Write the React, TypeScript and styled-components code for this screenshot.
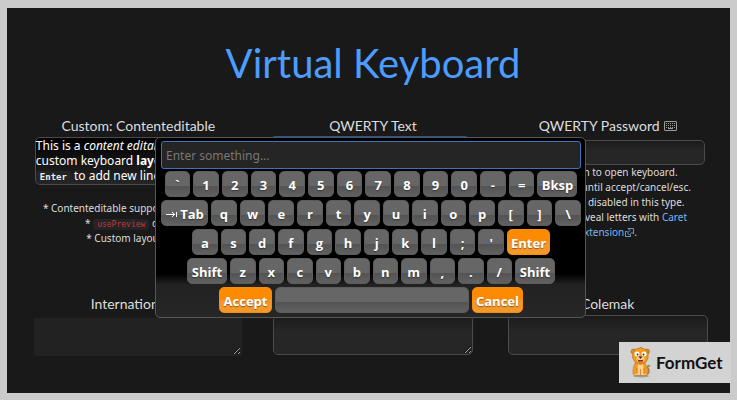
import React from "react";
import styled, { createGlobalStyle, css } from "styled-components";

const GlobalStyle = createGlobalStyle`
  * { box-sizing: border-box; }
  body {
    margin: 0;
    background: #cbcbcb;
    color: #eee;
    font-family: "Noto Sans", "Open Sans", sans-serif;
  }
`;

const Page = styled.div`
  min-height: 100vh;
  padding: 8px 7px 7px;
  display: flex;
`;

const Stage = styled.main`
  position: relative;
  flex: 1;
  padding: 26px 5px 36px 14px;
  background: #191919;
`;

const Title = styled.h1`
  margin: 0 0 24px;
  color: #4c9dff;
  font: 400 40px/58px Lato, sans-serif;
  text-align: center;
`;

const Fields = styled.div`
  display: grid;
  grid-template-columns: repeat(3, minmax(0, 1fr));
`;

const Field = styled.section<{ $tall?: boolean }>`
  display: flex;
  flex-direction: column;
  align-items: center;
  min-height: ${(p) => (p.$tall ? "178px" : "0")};
  white-space: nowrap;
`;

const Heading = styled.label`
  display: flex;
  align-items: center;
  gap: 4px;
  min-height: 20px;
  margin: 0;
  color: #ddd;
  font: 400 14px/20px Lato, sans-serif;
`;

const boxStyle = css`
  border: 1px solid #4b4b4b;
  border-radius: 5px;
  background: linear-gradient(#1b1b1b, #262626 40%);
  color: #fff;
  font-family: inherit;
  outline: none;
`;

const Editable = styled.div`
  ${boxStyle}
  width: 207px;
  height: 48px;
  margin: 1px 0 16px;
  background: linear-gradient(#000, #262626);
  font-size: 12px;
  line-height: 15px;
`;

const TextInput = styled.input<{ $active?: boolean }>`
  ${boxStyle}
  width: 200px;
  height: 25px;
  margin: 4px 5px 0 0;
  ${(p) => p.$active && css`margin-top: 0; border-color: #2b5590;`}
`;

const Area = styled.textarea<{ $plain?: boolean }>`
  ${boxStyle}
  width: 200px;
  height: 40px;
  margin-top: 1px;
  resize: both;
  ${(p) =>
    p.$plain &&
    css`
      width: 208px;
      height: 38px;
      margin-top: 4px;
      border-color: #222;
      border-radius: 2px;
      background: #222;
    `}
`;

const Notes = styled.p`
  margin: 0;
  color: #ddd;
  font-size: 10px;
  line-height: 15px;
  text-align: center;
`;

const Code = styled.code<{ $red?: boolean }>`
  padding: 1px 4px;
  border-radius: 3px;
  background: #242424;
  color: ${(p) => (p.$red ? "#c8343c" : "#eee")};
  font: ${(p) => (p.$red ? "400 8px" : "700 9px")} "DejaVu Sans Mono", monospace;
`;

const Link = styled.a`
  color: #76b8f5;
  text-decoration: none;
  svg { vertical-align: -1px; margin-left: 1px; }
`;

const Keyboard = styled.section`
  position: absolute;
  top: 129px;
  left: 148px;
  width: 431px;
  display: flex;
  flex-direction: column;
  align-items: center;
  gap: 3px;
  padding: 3px 4px 4px 5px;
  border: 1px solid #555;
  border-radius: 5px;
  background: linear-gradient(#000 76%, #222 82%, #262626);
`;

const Preview = styled.input`
  width: 100%;
  height: 28px;
  margin-bottom: -1px;
  padding: 0 4px;
  border: 1px solid #3f72ba;
  border-radius: 3px;
  outline: 0;
  background: #252525;
  color: #eee;
  font: 400 12px "Noto Sans", sans-serif;
  &::placeholder { color: #777; opacity: 1; }
`;

const KeyRow = styled.div<{ $width: number }>`
  display: flex;
  gap: 3px;
  width: 100%;
  max-width: ${(p) => p.$width}px;
`;

const Key = styled.button<{ $width?: number; $accent?: boolean }>`
  flex: ${(p) => (p.$width ? `0 0 ${p.$width}px` : "1 1 0")};
  display: flex;
  align-items: center;
  justify-content: center;
  gap: 2px;
  min-width: 0;
  height: 26px;
  padding: 2px 0 0;
  border: 1px solid ${(p) => (p.$accent ? "#fb8c06" : "#5c5c5c")};
  border-radius: 5px;
  background: ${(p) =>
    p.$accent
      ? "linear-gradient(#fc8a02 50%, #f5962a 52%, #f3992c)"
      : "linear-gradient(#666 58%, #535353 60%, #616161)"};
  color: #fff;
  font: 700 13px/20px "Open Sans", sans-serif;
  text-shadow: 0 1px 1px #0006;
  white-space: nowrap;
`;

const Badge = styled.div`
  position: absolute;
  right: -1px;
  bottom: 10px;
  display: flex;
  align-items: center;
  gap: 4px;
  width: 112px;
  height: 41px;
  padding-left: 11px;
  background: #d3d3d3;
  color: #111;
  font: 700 17px/20px Lato, sans-serif;
`;

const KeyboardIcon = () => (
  <svg width="13" height="10" viewBox="0 0 13 10" fill="none" stroke="#9a9a9a" aria-hidden="true">
    <rect x=".5" y=".5" width="12" height="9" rx=".5" />
    <path d="M2 2.5h9M2 4.5h9M2 6.5h9" strokeDasharray="1 1" />
    <path d="M4 7.5h5" />
  </svg>
);

const ExternalIcon = () => (
  <svg width="9" height="9" viewBox="0 0 9 9" fill="none" stroke="#76b8f5" strokeWidth=".8" aria-hidden="true">
    <path d="M2.500 3.500h-2v5h5V7M3 .5h5.500V6L7 4.500l-2.500 2.500L2.500 5 5 2.500z" />
  </svg>
);

const TabIcon = () => (
  <svg width="13" height="9" viewBox="0 0 13 9" fill="none" stroke="#fff" aria-hidden="true">
    <path d="M1 4.500h9M7 2l2.500 2.500L7 7M11.500 2v5" />
  </svg>
);

const Lion = () => (
  <svg width="22" height="31" viewBox="0 0 22 31" aria-hidden="true">
    <ellipse cx="11" cy="29" rx="8" ry="1.500" fill="#a49b91" />
    <path d="M16 27c4 0 3-5 2-6s0-3 2-2" fill="none" stroke="#9b7b55" strokeWidth="1.500" />
    <path d="M6 15c-3 4-4 11-2 13h13c2-4 0-10-3-13z" fill="#f39a22" stroke="#bc7220" strokeWidth=".6" />
    <path d="M8 17q2 2 5 0l1 11H7z" fill="#f9d38b" />
    <path d="M7 21v7M14 21v7M10.500 22v6" stroke="#bd731d" strokeWidth=".7" />
    <path d="M4 28q2-3 5 0zM12 28q3-3 5 0z" fill="#ffc65c" />
    <circle cx="3.500" cy="4.500" r="2.500" fill="#e78b20" stroke="#8f6a42" strokeWidth=".6" />
    <circle cx="17" cy="4.500" r="2.500" fill="#e78b20" stroke="#8f6a42" strokeWidth=".6" />
    <path d="M3 5q3-4 7-4l1-1 1 1q5 1 6 5 1 6-2 9-6 4-11 0-4-4-2-10z" fill="#f5991f" stroke="#ad6b24" strokeWidth=".6" />
    <circle cx="7" cy="7" r="2.500" fill="#fff" />
    <circle cx="14" cy="7" r="2.500" fill="#fff" />
    <circle cx="7.500" cy="7.500" r=".9" fill="#222" />
    <circle cx="13.500" cy="7.500" r=".9" fill="#222" />
    <ellipse cx="10.500" cy="12" rx="4" ry="2.500" fill="#f8d599" />
    <path d="M8.500 9.500h4L10.500 12z" fill="#4b2517" />
    <path d="M7.500 12.500q3 1 6 0-1 3-3 3t-3-3z" fill="#8d2824" />
    <path d="M9 14.500q1.500-1 3 0-1.500 1.500-3 0z" fill="#ee7771" />
  </svg>
);

const letters = (text: string) => text.split("").map((c) => <Key key={c} type="button">{c}</Key>);

export default function App() {
  return (
    <>
      <GlobalStyle />
      <Page>
        <Stage>
          <Title>Virtual Keyboard</Title>
          <Fields>
            <Field $tall>
              <Heading as="h2" id="custom">Custom: Contenteditable</Heading>
              <Editable contentEditable suppressContentEditableWarning role="textbox" aria-labelledby="custom">
                This is a <em>content editable</em> div,<br />
                custom keyboard <b>layout</b>. Press<br />
                <Code>Enter</Code> to add new lines.
              </Editable>
              <Notes>
                * Contenteditable support experimental.<br />
                * <Code $red>usePreview</Code> disabled<br />
                * Custom layout used.
              </Notes>
            </Field>
            <Field $tall>
              <Heading htmlFor="text">QWERTY Text</Heading>
              <TextInput id="text" $active />
            </Field>
            <Field $tall>
              <Heading htmlFor="password">QWERTY Password <KeyboardIcon /></Heading>
              <TextInput id="password" type="password" />
              <Notes>
                * Click icon to open keyboard.<br />
                * Stay open until accept/cancel/esc.<br />
                * Preview is disabled in this type.<br />
                * You can reveal letters with <Link href="#caret">Caret</Link><br />
                <Link href="#caret">extension<ExternalIcon /></Link>.
              </Notes>
            </Field>
            <Field>
              <Heading htmlFor="international">International <KeyboardIcon /></Heading>
              <Area id="international" $plain />
            </Field>
            <Field>
              <Heading as="div" />
              <Area aria-label="Text area" />
            </Field>
            <Field>
              <Heading htmlFor="colemak">Colemak</Heading>
              <Area id="colemak" />
            </Field>
          </Fields>

          <Keyboard aria-label="Keyboard">
            <Preview placeholder="Enter something..." aria-label="Enter something" />
            <KeyRow $width={413}>
              {letters("`1234567890-=")}
              <Key type="button" $width={40}>Bksp</Key>
            </KeyRow>
            <KeyRow $width={420}>
              <Key type="button" $width={47}><TabIcon />Tab</Key>
              {letters("qwertyuiop[]\\")}
            </KeyRow>
            <KeyRow $width={358}>
              {letters("asdfghjkl;'")}
              <Key type="button" $width={43} $accent>Enter</Key>
            </KeyRow>
            <KeyRow $width={368}>
              <Key type="button" $width={40}>Shift</Key>
              {letters("zxcvbnm,./")}
              <Key type="button" $width={40}>Shift</Key>
            </KeyRow>
            <KeyRow $width={304}>
              <Key type="button" $width={53} $accent>Accept</Key>
              <Key type="button" aria-label="Space" />
              <Key type="button" $width={51} $accent>Cancel</Key>
            </KeyRow>
          </Keyboard>

          <Badge><Lion />FormGet</Badge>
        </Stage>
      </Page>
    </>
  );
}
